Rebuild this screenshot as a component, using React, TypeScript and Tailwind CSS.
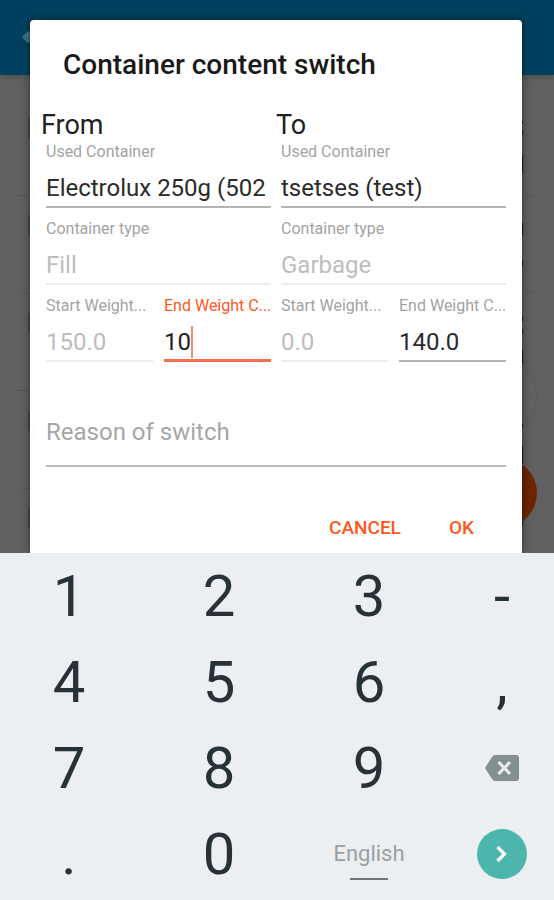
import { useState } from "react";

type Tone = "normal" | "disabled" | "active";

const labelTone = {
    normal: "text-[#a3a3a3]",
    disabled: "text-[#a3a3a3]",
    active: "text-[#ff5722]",
}

const inputTone = {
    normal: "border-b-2 border-[#b4b4b4] text-[#2b2b2b]",
    disabled: "border-b-2 border-[#ececec] text-[#bdbdbd]",
    active: "border-b-3 border-[#f4704d] text-[#222222]",
}

function Field({ id, label, initial, tone = "normal" }: { id: string, label: string, initial: string, tone?: Tone }) {
    const [value, setValue] = useState<string>(initial);

    return (
        <div className="min-w-0">
            <label htmlFor={id} className={`block h-5 text-base leading-5 whitespace-nowrap ${labelTone[tone]}`}>{label}</label>
            <div className={`mt-1.5 flex h-10 items-center pt-0.5 ${inputTone[tone]}`}>
                <input
                    id={id}
                    type="text"
                    value={value}
                    disabled={tone === "disabled"}
                    onChange={(e) => setValue(e.target.value)}
                    className={`text-2xl leading-8 outline-none ${tone === "active" ? "[field-sizing:content]" : "w-full min-w-0"}`}
                />
                {tone === "active" && <span className="h-8 w-0.5 bg-[#f28b70]" />}
            </div>
        </div>
    )
}

function Side({ id, title, container, type, start, end, active = false }: { id: string, title: string, container: string, type: string, start: string, end: string, active?: boolean }) {
    return (
        <div className="min-w-0">
            <h2 className="text-[27px] leading-[34px] text-[#222222]">{title}</h2>
            <div className="flex flex-col gap-[11px] px-[5px]">
                <Field id={`${id}-container`} label="Used Container" initial={container} />
                <Field id={`${id}-type`} label="Container type" initial={type} tone="disabled" />
                <div className="grid grid-cols-2 gap-[11px]">
                    <Field id={`${id}-start`} label="Start Weight..." initial={start} tone="disabled" />
                    <Field id={`${id}-end`} label="End Weight C..." initial={end} tone={active ? "active" : "normal"} />
                </div>
            </div>
        </div>
    )
}

// The dimmed page that shows on both sides of the dialog
function Backdrop() {
    return (
        <div className="absolute inset-0 overflow-hidden bg-[#606060]" aria-hidden="true">
            <div className="h-[75px] bg-[#00405f] shadow-md" />
            <svg className="absolute top-0 left-0" width="32" height="553">
                <path d="M22 37L27 31.500H32V42.500H27Z" fill="#3f708b" />
                <path d="M17 195.500H30M21 293.500H30M17 390.500H30M21 488.500H30" stroke="#555555" />
                <path d="M29 118v20M29 215v20M29 313v20M29 411v20M29 508v20" stroke="#484848" strokeWidth="2" />
            </svg>
            <svg className="absolute top-0 right-0" width="34" height="553">
                <path d="M5 195.500H16M5 292.500H16" stroke="#595959" />
                <circle cx="-18" cy="395" r="35" fill="#616161" stroke="#5a5a5a" />
                <circle cx="-18" cy="493" r="35" fill="#6e2400" />
                <path d="M2.500 121v3M2.500 130v5M2.500 155v18M2.500 223v13M2.500 260v6M2.500 316v5M2.500 329v5M2.500 350v14M2.500 424v4M2.500 446v18M2.500 522v4" stroke="#1d1d1d" />
            </svg>
        </div>
    )
}

function Keyboard() {
    const digit = "flex items-center justify-center text-[58px] leading-none text-[#263238]";

    return (
        <div className="grid auto-rows-[86px] grid-cols-[138fr_138fr_138fr_104fr] gap-x-3 bg-[#eceff1] pb-[3px]">
            <button className={digit}>1</button>
            <button className={digit}>2</button>
            <button className={digit}>3</button>
            <button className={digit}>-</button>
            <button className={digit}>4</button>
            <button className={digit}>5</button>
            <button className={digit}>6</button>
            <button className={digit}>,</button>
            <button className={digit}>7</button>
            <button className={digit}>8</button>
            <button className={digit}>9</button>
            <button aria-label="Backspace" className="flex items-center justify-center">
                <svg width="34" height="26" viewBox="0 0 34 26">
                    <path d="M10 0H31Q34 0 34 3V23Q34 26 31 26H10Q8 26 7 24L0 13L7 2Q8 0 10 0Z" fill="#84908f" />
                    <path d="M13.500 7L25 19M25 7L13.500 19" stroke="#eceff1" strokeWidth="3" />
                </svg>
            </button>
            <button className={digit}>.</button>
            <button className={digit}>0</button>
            <button className="flex flex-col items-center justify-center gap-2.5 pt-3 text-[22px] leading-7 text-[#9aa0a3]">
                English
                <span className="h-0.5 w-[38px] bg-[#6d777b]" />
            </button>
            <button aria-label="Next" className="flex items-center justify-center">
                <svg width="50" height="50" viewBox="0 0 50 50">
                    <circle cx="25" cy="25" r="25" fill="#4db6ac" />
                    <path d="M20.500 18L27.500 25L20.500 32" fill="none" stroke="#ffffff" strokeWidth="3.200" />
                </svg>
            </button>
        </div>
    )
}

function App() {
    const [reason, setReason] = useState<string>("");

    return (
        <div className="flex min-h-screen flex-col bg-[#eceff1] font-[Roboto,sans-serif]">
            <div className="relative flex flex-1 flex-col overflow-hidden pt-5 pr-8 pl-[30px]">
                <Backdrop />
                <div role="dialog" aria-labelledby="dialog-title" className="relative flex-1 rounded-t bg-white px-[11px] pt-7 shadow-[0_0_8px_rgba(0,0,0,0.5)]">
                    <h1 id="dialog-title" className="pl-[22px] text-[28px] leading-[34px] font-medium text-[#1a1a1a]">Container content switch</h1>
                    <div className="mt-[26px] grid grid-cols-2">
                        <Side id="from" title="From" container="Electrolux 250g (502" type="Fill" start="150.0" end="10" active />
                        <Side id="to" title="To" container="tsetses (test)" type="Garbage" start="0.0" end="140.0" />
                    </div>
                    <div className="mt-[37px] px-[5px]">
                        <input
                            type="text"
                            aria-label="Reason of switch"
                            placeholder="Reason of switch"
                            value={reason}
                            onChange={(e) => setReason(e.target.value)}
                            className="block h-[68px] w-full border-b-2 border-[#b9b9b9] text-2xl text-[#2b2b2b] outline-none placeholder:text-[#a6a6a6]"
                        />
                    </div>
                    <div className="mt-[37px] flex justify-end gap-4 pr-[21px] text-[19px] font-medium text-[#ff5722]">
                        <button className="h-12 px-4">CANCEL</button>
                        <button className="h-12 px-4">OK</button>
                    </div>
                </div>
            </div>
            <Keyboard />
        </div>
    )
}

export default App;
